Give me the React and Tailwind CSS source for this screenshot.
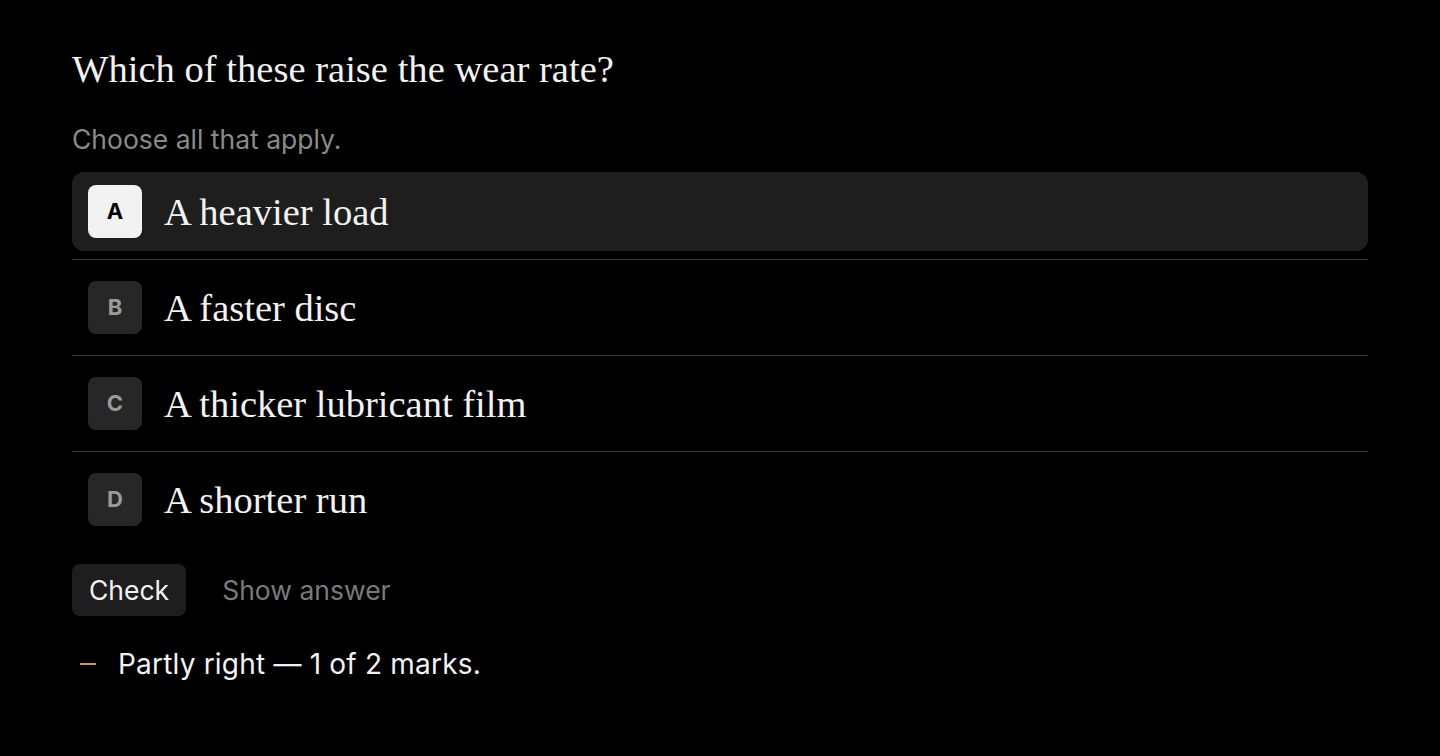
import React from "react";

const options = [
  { key: "A", label: "A heavier load", selected: true },
  { key: "B", label: "A faster disc", selected: false },
  { key: "C", label: "A thicker lubricant film", selected: false },
  { key: "D", label: "A shorter run", selected: false },
];

const serif = { fontFamily: '"Liberation Serif", "DejaVu Serif", serif' };

const App = () => {
  return (
    <main className="min-h-screen w-full bg-black px-[72px] pt-[46px] font-['Inter',sans-serif]">
      <h1 style={serif} className="text-[38.6px] leading-[46px] text-[#f2f2f2] font-normal">
        Which of these raise the wear rate?
      </h1>
      <p className="mt-[32px] text-[26.5px] leading-[30px] text-[#8a8a8a]">Choose all that apply.</p>

      <section className="mt-[18px] flex flex-col">
        {options.map((opt, i) => (
          <div key={opt.key}>
            <div
              className={`flex h-[79px] items-center gap-[22px] rounded-xl px-4 ${
                opt.selected ? "bg-[#1e1e1e]" : ""
              }`}
            >
              <div
                className={`flex h-[53px] w-[54px] items-center justify-center rounded-lg text-[22px] font-bold ${
                  opt.selected ? "bg-[#f2f2f2] text-black" : "bg-[#272727] text-[#9b9b9b]"
                }`}
              >
                {opt.key}
              </div>
              <span style={serif} className="text-[38.5px] leading-[46px] text-[#f2f2f2]">
                {opt.label}
              </span>
            </div>
            {i < options.length - 1 && <div className="my-2 h-px bg-[#3a3a3a]"></div>}
          </div>
        ))}
      </section>

      <div className="mt-[25px] flex items-center gap-9">
        <button className="h-[52px] rounded-lg bg-[#1e1e1e] px-[17px] text-[26.5px] leading-[32px] text-[#f2f2f2]">
          Check
        </button>
        <button className="text-[26.5px] leading-[32px] text-[#7a7a7a]">Show answer</button>
      </div>

      <div className="mt-[32px] flex items-center gap-[22px] pl-2">
        <span className="h-[2px] w-4 bg-[#d9964a]"></span>
        <span className="text-[28px] leading-[32px] tracking-[0.2px] text-[#f2f2f2]">Partly right — 1 of 2 marks.</span>
      </div>
    </main>
  );
};

export default App;
